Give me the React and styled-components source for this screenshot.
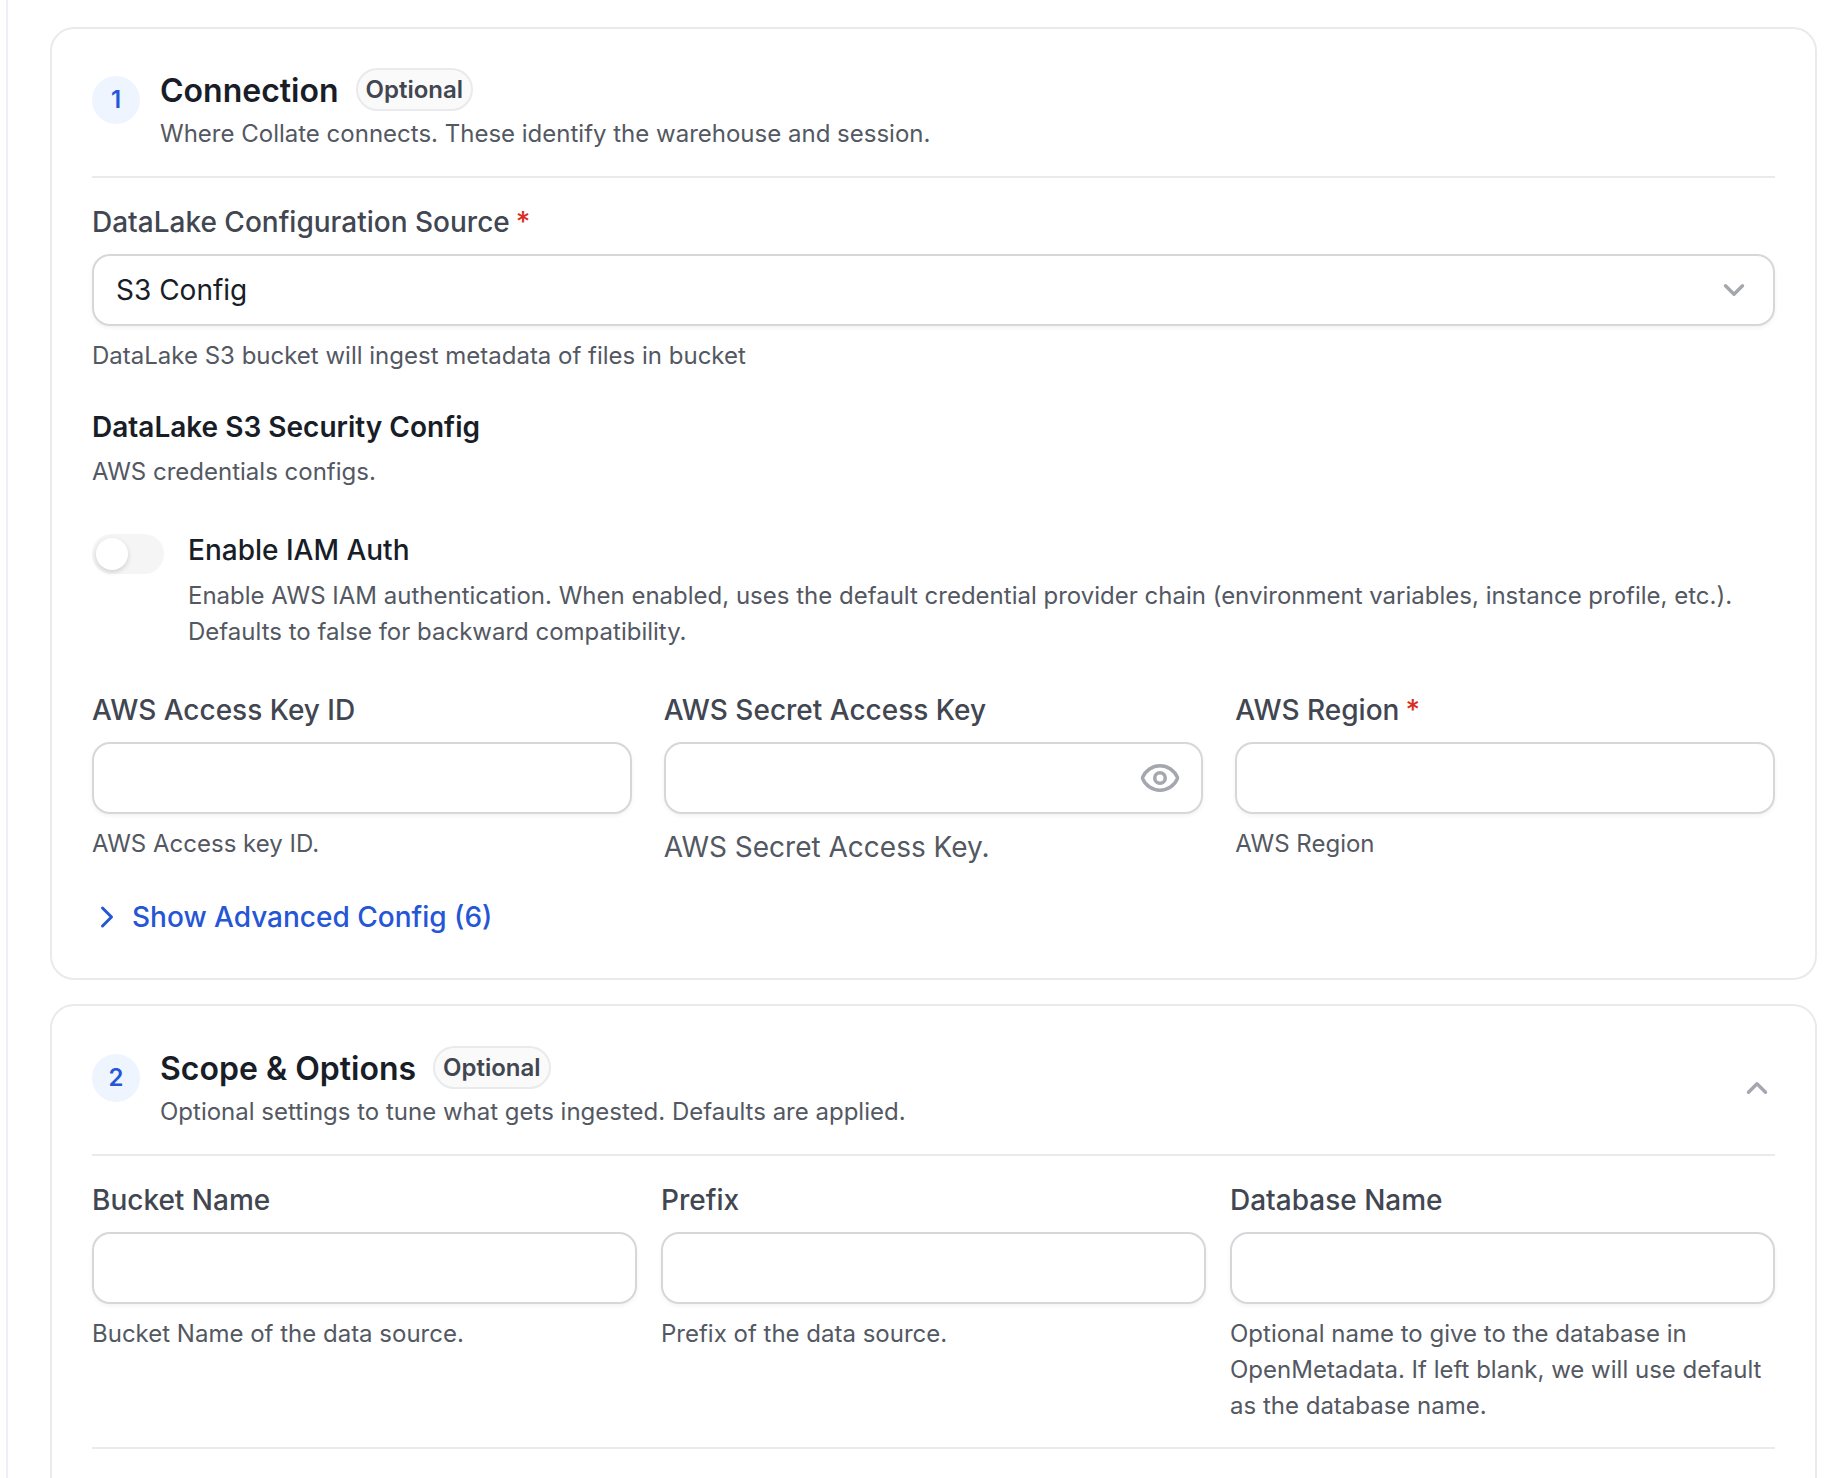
import React from 'react';
import styled, { createGlobalStyle } from 'styled-components';
import { ChevronDown, ChevronRight, ChevronUp, Eye } from 'lucide-react';

const GlobalStyle = createGlobalStyle`
  html, body {
    margin: 0;
    padding: 0;
    background: #fff;
  }
  body {
    font-family: 'Inter', 'Liberation Sans', sans-serif;
    color: #181d27;
    -webkit-font-smoothing: antialiased;
  }
  * {
    box-sizing: border-box;
  }
`;

const Page = styled.div`
  height: 1478px;
  overflow: hidden;
  padding: 27px 29px 0 6px;
`;

const Rail = styled.div`
  position: fixed;
  top: 0;
  bottom: 0;
  left: 6px;
  width: 2px;
  background: #eef0f8;
`;

const Column = styled.div`
  display: flex;
  flex-direction: column;
  gap: 24px;
  padding-left: 44px;
`;

const Card = styled.section`
  border: 2px solid #e9eaeb;
  border-radius: 24px;
  background: #fff;
  padding: ${(p) => p.$top}px 40px ${(p) => p.$bottom}px 40px;
`;

const Header = styled.header`
  display: flex;
  align-items: flex-start;
  gap: 20px;
  padding-bottom: 24px;
  border-bottom: 2px solid #e9eaeb;
`;

const StepBadge = styled.div`
  flex: none;
  width: 48px;
  height: 48px;
  margin-top: 8px;
  padding-bottom: 2px;
  border-radius: 50%;
  background: #eff5ff;
  color: #2456d6;
  font-size: 24px;
  font-weight: 600;
  display: flex;
  align-items: center;
  justify-content: center;
`;

const HeaderText = styled.div`
  flex: 1;
  min-width: 0;
`;

const TitleRow = styled.div`
  display: flex;
  align-items: center;
  gap: 17px;
  height: 43px;
`;

const Title = styled.h2`
  margin: 2px 0 0;
  font-size: 32px;
  line-height: 40px;
  font-weight: 600;
  color: #181d27;
`;

const Pill = styled.span`
  height: 43px;
  padding: 0 8px;
  border: 2px solid #e9eaeb;
  border-radius: 22px;
  background: #fafafa;
  color: #414651;
  font-size: 24px;
  font-weight: 600;
  display: inline-flex;
  align-items: center;
`;

const Collapse = styled.div`
  flex: none;
  align-self: center;
  color: #a4a7ae;
  display: flex;
  margin-right: 1px;
`;

const Sub = styled.p`
  margin: 5px 0 0;
  font-size: 24px;
  line-height: 36px;
  color: #535862;
`;

const Field = styled.div`
  min-width: 0;
`;

const Label = styled.label`
  display: block;
  font-size: 28px;
  line-height: 40px;
  font-weight: 500;
  color: #414651;
  margin-bottom: 12px;
`;

const Required = styled.span`
  color: #d92d20;
  margin-left: 6px;
`;

const InputBox = styled.div`
  height: 72px;
  padding: 0 22px;
  border: 2px solid #d5d7da;
  border-radius: 18px;
  background: #fff;
  box-shadow: 0 2px 4px rgba(10, 13, 18, 0.05);
  display: flex;
  align-items: center;
  justify-content: space-between;
  color: #a4a7ae;
  font-size: 28px;
`;

const InputValue = styled.span`
  color: #181d27;
`;

const EyeButton = styled.span`
  display: flex;
  margin: 0 -2px 0 auto;
`;

const Help = styled.p`
  margin: ${(p) => (p.$large ? '15px' : '12px')} 0 0;
  font-size: ${(p) => (p.$large ? '28px' : '24px')};
  line-height: 36px;
  color: #535862;
`;

const Block = styled.div`
  margin-top: ${(p) => p.$top}px;
`;

const SubHeading = styled.h3`
  margin: 0;
  font-size: 28px;
  line-height: 40px;
  font-weight: 600;
  color: #181d27;
`;

const SubHelp = styled(Help)`
  margin-top: 7px;
`;

const ToggleRow = styled.div`
  display: flex;
  align-items: flex-start;
  gap: 24px;
  margin-top: 40px;
`;

const Toggle = styled.div`
  flex: none;
  width: 72px;
  height: 40px;
  margin-top: 4px;
  padding: 4px;
  border-radius: 20px;
  background: #f5f5f5;
`;

const Knob = styled.div`
  width: 32px;
  height: 32px;
  border-radius: 50%;
  background: #fff;
  box-shadow: 0 2px 5px rgba(10, 13, 18, 0.16);
`;

const ToggleLabel = styled.div`
  font-size: 28px;
  line-height: 40px;
  font-weight: 500;
  color: #181d27;
`;

const ToggleHelp = styled(Help)`
  margin-top: 8px;
`;

const Grid = styled.div`
  display: grid;
  grid-template-columns: repeat(3, 1fr);
  column-gap: ${(p) => p.$gap}px;
  margin-top: ${(p) => p.$top}px;
`;

const AdvancedLink = styled.a`
  display: flex;
  align-items: center;
  gap: 7px;
  margin: 32px 0 0 -3px;
  color: #2456d6;
  font-size: 28px;
  line-height: 40px;
  font-weight: 500;
`;

const BottomRule = styled.div`
  margin-top: 23px;
  border-bottom: 2px solid #e9eaeb;
`;

const App = () => (
  <Page>
    <GlobalStyle />
    <Rail />
    <Column>
      <Card $top={39} $bottom={41}>
        <Header>
          <StepBadge>1</StepBadge>
          <HeaderText>
            <TitleRow>
              <Title>Connection</Title>
              <Pill>Optional</Pill>
            </TitleRow>
            <Sub>Where Collate connects. These identify the warehouse and session.</Sub>
          </HeaderText>
        </Header>

        <Block $top={24}>
          <Field>
            <Label>
              DataLake Configuration Source<Required>*</Required>
            </Label>
            <InputBox>
              <InputValue>S3 Config</InputValue>
              <ChevronDown size={34} strokeWidth={2.4} />
            </InputBox>
            <Help>DataLake S3 bucket will ingest metadata of files in bucket</Help>
          </Field>
        </Block>

        <Block $top={33}>
          <SubHeading>DataLake S3 Security Config</SubHeading>
          <SubHelp>AWS credentials configs.</SubHelp>
        </Block>

        <ToggleRow>
          <Toggle>
            <Knob />
          </Toggle>
          <div>
            <ToggleLabel>Enable IAM Auth</ToggleLabel>
            <ToggleHelp>
              Enable AWS IAM authentication. When enabled, uses the default credential provider chain (environment
              variables, instance profile, etc.). Defaults to false for backward compatibility.
            </ToggleHelp>
          </div>
        </ToggleRow>

        <Grid $gap={32} $top={40}>
          <Field>
            <Label>AWS Access Key ID</Label>
            <InputBox />
            <Help>AWS Access key ID.</Help>
          </Field>
          <Field>
            <Label>AWS Secret Access Key</Label>
            <InputBox>
              <EyeButton>
                <Eye size={42} strokeWidth={2} />
              </EyeButton>
            </InputBox>
            <Help $large>AWS Secret Access Key.</Help>
          </Field>
          <Field>
            <Label>
              AWS Region<Required>*</Required>
            </Label>
            <InputBox />
            <Help>AWS Region</Help>
          </Field>
        </Grid>

        <AdvancedLink>
          <ChevronRight size={36} strokeWidth={2} />
          Show Advanced Config (6)
        </AdvancedLink>
      </Card>

      <Card $top={40} $bottom={120}>
        <Header>
          <StepBadge>2</StepBadge>
          <HeaderText>
            <TitleRow>
              <Title>Scope &amp; Options</Title>
              <Pill>Optional</Pill>
            </TitleRow>
            <Sub>Optional settings to tune what gets ingested. Defaults are applied.</Sub>
          </HeaderText>
          <Collapse>
            <ChevronUp size={34} strokeWidth={2.4} />
          </Collapse>
        </Header>

        <Grid $gap={24} $top={24}>
          <Field>
            <Label>Bucket Name</Label>
            <InputBox />
            <Help>Bucket Name of the data source.</Help>
          </Field>
          <Field>
            <Label>Prefix</Label>
            <InputBox />
            <Help>Prefix of the data source.</Help>
          </Field>
          <Field>
            <Label>Database Name</Label>
            <InputBox />
            <Help>Optional name to give to the database in OpenMetadata. If left blank, we will use default as the database name.</Help>
          </Field>
        </Grid>
        <BottomRule />
      </Card>
    </Column>
  </Page>
);

export default App;
